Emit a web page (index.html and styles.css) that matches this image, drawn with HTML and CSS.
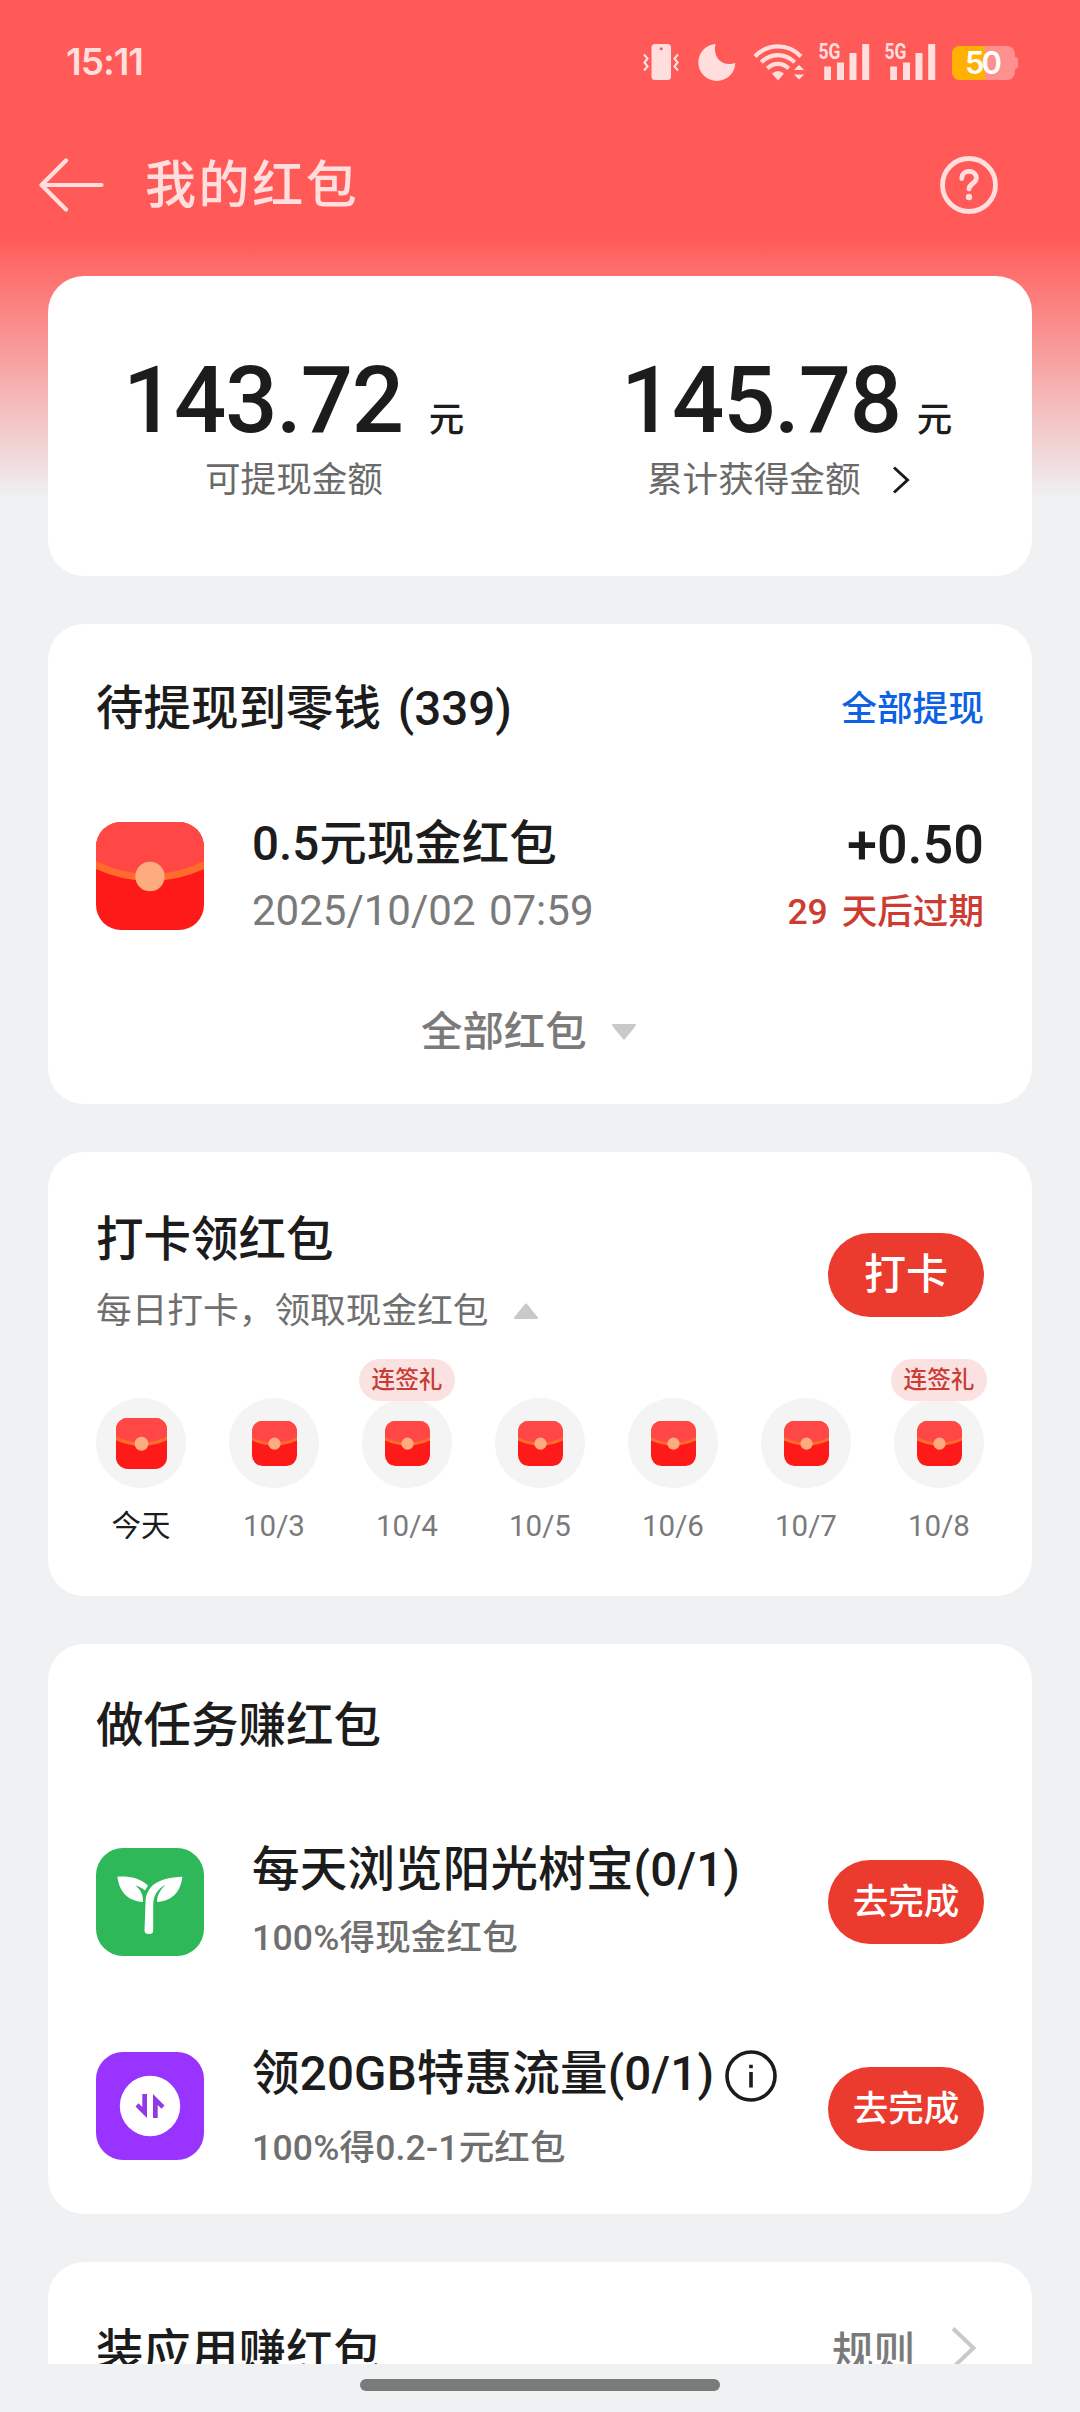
FILE: index.html
```html
<!DOCTYPE html>
<html lang="zh-CN">
<head>
<meta charset="utf-8">
<title>我的红包</title>
<link rel="stylesheet" href="styles.css">
</head>
<body>
<svg class="defs" aria-hidden="true">
  <symbol id="envelope" viewBox="0 0 108 108">
    <clipPath id="envelope-clip"><rect width="108" height="108" rx="25"/></clipPath>
    <g clip-path="url(#envelope-clip)">
      <rect width="108" height="108" fill="#ff1a1a"/>
      <path d="M0 0H108V47Q82 59 54 59Q26 59 0 47Z" fill="#ff6b2c"/>
      <path d="M0 0H108V39Q82 52 54 52Q26 52 0 39Z" fill="#ff4846"/>
      <circle cx="54" cy="54.5" r="14.7" fill="#ffab80"/>
    </g>
  </symbol>
</svg>
<div class="screen">
  <header class="top">
    <div class="status">
      <span class="time">15:11</span>
      <div class="status-icons">
        <svg class="i-vibrate" width="36" height="36" viewBox="0 0 36 36">
          <rect x="8.5" y="0" width="19.5" height="36" rx="3.5" fill="#ffdedd"/>
          <circle cx="18.2" cy="4.8" r="1.5" fill="#e0605d"/>
          <path d="M1 10.5L4.5 14.5L1.5 18.5L4.5 22.5L1 26.5M35 10.5L31.5 14.5L34.5 18.5L31.5 22.5L35 26.5" fill="none" stroke="#ffdedd" stroke-width="2.2"/>
        </svg>
        <svg class="i-moon" width="38" height="37" viewBox="0 0 38 37">
          <path d="M17.6 0C14.5 11 22 23.500 37.300 19A18.500 18.500 0 1 1 17.600 0Z" fill="#ffdedd"/>
        </svg>
        <svg class="i-wifi" width="52" height="37" viewBox="0 0 52 37">
          <g fill="none" stroke="#ffdedd" stroke-width="4.200">
            <path d="M2 12.500C15 -1 35 -1 48 12.500"/>
            <path d="M8.300 18.300C18 8.800 32 8.800 41.700 18.300"/>
            <path d="M14.300 24.500C20.500 18.200 29.500 18.200 35.700 24.500"/>
          </g>
          <path d="M19 29.500Q25 24.500 31 29.500L25 36.500ZM46 21L51.200 26H40.800ZM46 35.500L51.200 30.500H40.800Z" fill="#ffdedd"/>
        </svg>
        <svg class="i-signal" width="52" height="47" viewBox="0 -10 52 47">
          <text x="0.500" y="16" textLength="22" lengthAdjust="spacingAndGlyphs" class="net">5G</text>
          <path d="M6.200 23.500h6.800v13.500h-6.800zM19 19.500h7v17.500h-7zM31.500 10h7v27h-7zM44.200 1h7v36h-7z" fill="#ffdedd"/>
        </svg>
        <svg class="i-signal" width="52" height="47" viewBox="0 -10 52 47">
          <text x="0.500" y="16" textLength="22" lengthAdjust="spacingAndGlyphs" class="net">5G</text>
          <path d="M6.200 23.500h6.800v13.500h-6.800zM19 19.500h7v17.500h-7zM31.500 10h7v27h-7zM44.200 1h7v36h-7z" fill="#ffdedd"/>
        </svg>
        <svg class="i-battery" width="67" height="46" viewBox="0 -6 67 46">
          <clipPath id="battery-clip"><rect width="63" height="34" rx="8"/></clipPath>
          <g clip-path="url(#battery-clip)">
            <rect width="63" height="34" fill="#ff9090"/>
            <rect width="33" height="34" fill="#ffb000"/>
          </g>
          <path d="M63 11q3 0 3 3v6q0 3-3 3z" fill="#ff9090"/>
          <text x="31.500" y="28" text-anchor="middle" textLength="37" class="level">50</text>
        </svg>
      </div>
    </div>
    <div class="titlebar">
      <svg class="back" width="66" height="56" viewBox="0 0 66 56">
        <path d="M62.500 28H3M27 3.500L2.500 28L27 52.500" fill="none" stroke="#ffdedd" stroke-width="4.200" stroke-linecap="round" stroke-linejoin="round"/>
      </svg>
      <h1>我的红包</h1>
      <svg class="help" width="58" height="58" viewBox="0 0 58 58" fill="none" stroke="#ffdedd">
        <circle cx="29" cy="29" r="26.500" stroke-width="4.800"/>
        <path d="M21.800 22.500C22 12.800 36.300 13.300 36.300 22.300C36.300 27.500 29 27.500 29 33" stroke-width="4.800" stroke-linecap="round"/>
        <circle cx="29" cy="41" r="3.200" fill="#ffdedd" stroke="none"/>
      </svg>
    </div>
  </header>

  <main class="cards">
    <section class="card summary">
      <div class="sum available">
        <div class="amount"><b>143.72</b><span>元</span></div>
        <div class="caption">可提现金额</div>
      </div>
      <div class="sum total">
        <div class="amount"><b>145.78</b><span>元</span></div>
        <div class="caption">累计获得金额
          <svg width="18" height="28" viewBox="0 0 18 28"><path d="M2 1.500L15.500 14L2 26.500" fill="none" stroke="#1c1c1c" stroke-width="3"/></svg>
        </div>
      </div>
    </section>

    <section class="card pending">
      <div class="head">
        <h2>待提现到零钱 (339)</h2>
        <a class="link">全部提现</a>
      </div>
      <div class="packet">
        <svg width="108" height="108"><use href="#envelope"/></svg>
        <div class="info">
          <div class="name">0.5元现金红包</div>
          <div class="date">2025/10/02 07:59</div>
        </div>
        <div class="value">
          <div class="plus">+0.50</div>
          <div class="expire">29 天后过期</div>
        </div>
      </div>
      <div class="more"><span>全部红包</span>
        <svg width="26" height="18" viewBox="0 0 26 18"><path d="M2 2H24L13 15.500Z" fill="#c9c9c9" stroke="#c9c9c9" stroke-width="2" stroke-linejoin="round"/></svg>
      </div>
    </section>

    <section class="card checkin">
      <div class="head">
        <div class="intro">
          <h2>打卡领红包</h2>
          <div class="hint"><span>每日打卡，领取现金红包</span>
            <svg width="26" height="18" viewBox="0 0 26 18"><path d="M2 16H24L13 2.500Z" fill="#c9c9c9" stroke="#c9c9c9" stroke-width="2" stroke-linejoin="round"/></svg>
          </div>
        </div>
        <button class="btn big">打卡</button>
      </div>
      <div class="days">
        <div class="day today"><div class="disc"><svg><use href="#envelope"/></svg></div><span>今天</span></div>
        <div class="day"><div class="disc"><svg><use href="#envelope"/></svg></div><span>10/3</span></div>
        <div class="day"><div class="disc"><svg><use href="#envelope"/></svg></div><span>10/4</span><em>连签礼</em></div>
        <div class="day"><div class="disc"><svg><use href="#envelope"/></svg></div><span>10/5</span></div>
        <div class="day"><div class="disc"><svg><use href="#envelope"/></svg></div><span>10/6</span></div>
        <div class="day"><div class="disc"><svg><use href="#envelope"/></svg></div><span>10/7</span></div>
        <div class="day"><div class="disc"><svg><use href="#envelope"/></svg></div><span>10/8</span><em>连签礼</em></div>
      </div>
    </section>

    <section class="card tasks">
      <h2>做任务赚红包</h2>
      <div class="task">
        <svg width="108" height="108" viewBox="0 0 108 108">
          <rect width="108" height="108" rx="27" fill="#2eb85a"/>
          <path d="M21.400 28.700C33 28 44 30 52 37.500L49 42.500C46 40 43 38.500 39.500 37.500C45 42 47.200 46.500 47 54C34 53 23.500 46 21.400 28.700ZM86.400 28.700C62 29.500 50 38 49.500 54L48.500 82.500Q48.500 86 53 86Q57.300 86 57.200 82.500V57C57.500 47.500 61 41.500 69.500 36.500C63 43.500 61.200 47.500 61 54C75 53 84.500 45 86.400 28.700Z" fill="#fff"/>
        </svg>
        <div class="info">
          <div class="name">每天浏览阳光树宝(0/1)</div>
          <div class="reward">100%得现金红包</div>
        </div>
        <button class="btn">去完成</button>
      </div>
      <div class="task second">
        <svg width="108" height="108" viewBox="0 0 108 108">
          <rect width="108" height="108" rx="27" fill="#9933ff"/>
          <circle cx="54" cy="54" r="30.200" fill="#fff"/>
          <path d="M46.300 42H51V66L39.500 54.500L42.500 51.200L46.300 55ZM61.700 66H57V42L68.500 53.500L65.500 56.800L61.700 53Z" fill="#9238e6"/>
        </svg>
        <div class="info">
          <div class="name">领20GB特惠流量(0/1)
            <svg width="52" height="52" viewBox="0 0 52 52"><circle cx="26" cy="26" r="24" fill="none" stroke="#1c1c1c" stroke-width="3.600"/><path d="M26 22V37.500M26 14.800V18.300" stroke="#1c1c1c" stroke-width="3.600"/></svg>
          </div>
          <div class="reward">100%得0.2-1元红包</div>
        </div>
        <button class="btn">去完成</button>
      </div>
    </section>

    <section class="card apps">
      <h2>装应用赚红包</h2>
      <a class="rules">规则
        <svg width="26" height="44" viewBox="0 0 26 44"><path d="M2 2.500L22.500 22L2 41.500" fill="none" stroke="#c9c9c9" stroke-width="4"/></svg>
      </a>
    </section>
  </main>
  <footer class="gesture"><i></i></footer>
</div>
</body>
</html>
```
FILE: styles.css
```css
* { box-sizing: border-box; margin: 0; padding: 0; }

body {
  font-family: Roboto, "Noto Sans CJK SC", sans-serif;
  color: #1c1c1c;
  background: #eff1f3;
}

svg { display: block; flex: none; }
.defs { position: absolute; width: 0; height: 0; }

.screen {
  width: 1080px;
  height: 2412px;
  overflow: hidden;
  display: flex;
  flex-direction: column;
  background: linear-gradient(#ff5a57 0, #ff5a57 236px, #eff1f3 498px) no-repeat #eff1f3;
}

/* Status bar and title bar */
.top { height: 276px; flex: none; }

.status {
  display: flex;
  justify-content: space-between;
  align-items: flex-start;
  padding: 44px 61px 0 66px;
  height: 130px;
}
.time {
  font: 600 37px/36px Inter, sans-serif;
  letter-spacing: -1px;
  color: #ffdedd;
}
.status-icons { display: flex; align-items: flex-start; }
.i-moon { margin-left: 19px; }
.i-wifi { margin-left: 17px; }
.i-signal { margin: -11px 0 0 14px; }
.i-battery { margin: -4px 0 0 16px; }
.i-wifi + .i-signal { margin-left: 13px; }
.net { font: 700 22px Roboto, sans-serif; fill: #ffdedd; }
.level { font: 600 31px Inter, sans-serif; fill: #fff; }

.titlebar {
  display: flex;
  align-items: center;
  height: 110px;
  padding: 0 82px 0 39px;
}
.titlebar h1 {
  flex: 1;
  margin: 2px 0 0 40px;
  font-size: 51px;
  line-height: 72px;
  font-weight: 500;
  letter-spacing: 2.600px;
  color: #ffdedd;
}

/* Cards */
.cards {
  flex: none;
  height: 2088px;
  overflow: hidden;
  display: flex;
  flex-direction: column;
  gap: 48px;
  padding: 0 48px;
}
.card {
  flex: none;
  background: #fff;
  border-radius: 36px;
  padding: 0 48px;
}
h2 { font-size: 47.500px; line-height: 64px; font-weight: 500; word-spacing: 5px; }

.summary { height: 300px; display: flex; padding: 80px 0 0; }
.sum.available { width: 492px; padding-left: 75px; }
.sum.total { padding-left: 81px; }
.amount { display: flex; align-items: baseline; height: 90px; line-height: 90px; }
.amount b { font-size: 92px; font-weight: 500; letter-spacing: -1.200px; }
.amount span { font-size: 35.500px; font-weight: 500; margin-left: 26px; }
.total .amount span { margin-left: 16px; }
.caption {
  display: flex;
  align-items: center;
  margin-top: 9px;
  padding-left: 82px;
  font-size: 35.600px;
  line-height: 50px;
  color: #6a6a6a;
}
.total .caption { padding-left: 26px; }
.caption svg { margin-left: 32px; }

.pending { height: 480px; padding-top: 53px; }
.head { display: flex; justify-content: space-between; align-items: center; }
.link { margin-top: -8px; font-size: 35.700px; font-weight: 500; color: #0d62e3; }
.packet { display: flex; margin-top: 81px; height: 108px; }
.info { flex: 1; margin-left: 48px; }
.name { display: flex; font-size: 47.500px; line-height: 64px; font-weight: 500; white-space: nowrap; }
.packet .name { margin-top: -10px; }
.date { font-size: 42px; line-height: 50px; color: #7a7a7a; margin-top: 10px; word-spacing: 3px; }
.value { text-align: right; }
.plus { font-size: 54px; line-height: 64px; font-weight: 500; margin-top: -9px; }
.expire { font-size: 35.600px; line-height: 50px; font-weight: 500; color: #ce3b31; margin-top: 10px; word-spacing: 5px; }
.more {
  display: flex;
  align-items: center;
  margin: 74px 0 0 325px;
  font-size: 41.400px;
  line-height: 56px;
  font-weight: 500;
  color: #7a7a7a;
}
.more svg { margin-left: 24px; }

.checkin { height: 444px; padding-top: 56px; }
.hint { display: flex; align-items: center; margin: 15px 0 -1px; font-size: 35.700px; line-height: 48px; color: #6f6f6f; }
.hint svg { margin-left: 24px; }
.btn {
  flex: none;
  width: 156px;
  height: 84px;
  border: 0;
  border-radius: 42px;
  background: #eb3b2f;
  color: #fff;
  font: 500 35.500px/80px Roboto, "Noto Sans CJK SC", sans-serif;
}
.btn.big { font-size: 42px; margin-top: 8px; }
.days { display: flex; justify-content: space-between; margin-top: 64px; }
.day { position: relative; width: 90px; display: flex; flex-direction: column; align-items: center; }
.disc { width: 90px; height: 90px; border-radius: 50%; background: #f4f4f4; display: flex; align-items: center; justify-content: center; }
.disc svg { width: 45px; height: 45px; }
.today .disc svg { width: 51px; height: 51px; }
.day span { margin-top: 18px; font-size: 29.500px; line-height: 40px; color: #7a7a7a; }
.day.today span { color: #1c1c1c; }
.day em {
  position: absolute;
  left: -3px;
  top: -39px;
  width: 96px;
  height: 42px;
  border-radius: 21px;
  background: #fbe2e1;
  color: #c73c36;
  font: 500 23.700px/42px Roboto, "Noto Sans CJK SC", sans-serif;
  text-align: center;
}

.tasks { height: 570px; padding-top: 50px; }
.task { display: flex; align-items: center; height: 108px; margin-top: 90px; }
.task.second { margin-top: 96px; }
.task .info { height: 128px; }
.task .name { letter-spacing: 0.200px; }
.name svg { margin: 8px 0 0 11px; }
.reward { font-size: 35.500px; line-height: 48px; font-weight: 500; color: #6f6f6f; margin-top: 12px; letter-spacing: 0.200px; }
.second .reward { margin-top: 18px; }
.second .btn { margin-top: 6px; }

.apps { height: 300px; display: flex; justify-content: space-between; align-items: flex-start; padding-top: 59px; }
.rules { display: flex; align-items: center; font-size: 41.500px; line-height: 64px; font-weight: 500; color: #7a7a7a; margin-right: 7px; }
.rules svg { margin: -10px 0 0 36px; }

.gesture { flex: 1; background: #eff1f2; display: flex; justify-content: center; padding-top: 15px; }
.gesture i { width: 360px; height: 12px; border-radius: 6px; background: #797a7a; }
```
